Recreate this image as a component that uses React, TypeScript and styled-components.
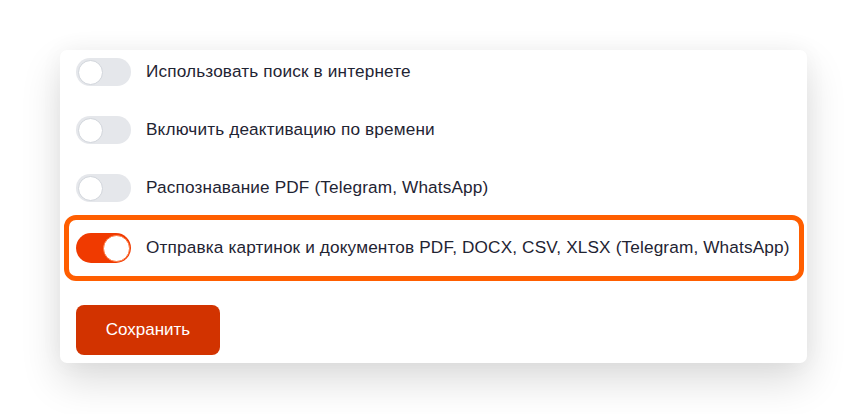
import React, { useState } from "react";
import styled, { createGlobalStyle } from "styled-components";

const GlobalStyle = createGlobalStyle`
  html, body { margin: 0; padding: 0; background: #ffffff; }
  body { font-family: "Liberation Sans", Arial, sans-serif; }
  * { box-sizing: border-box; }
`;

const Page = styled.div`
  width: 867px;
  height: 414px;
  padding: 50px 60px 0 60px;
  background: #ffffff;
  overflow: hidden;
`;

const Card = styled.div`
  width: 747px;
  background: #ffffff;
  border-radius: 7px;
  box-shadow: 0 18px 40px rgba(0, 0, 0, 0.14), 0 0 24px rgba(0, 0, 0, 0.04);
  padding: 8px 16px 8px 16px;
  display: flex;
  flex-direction: column;
`;

const List = styled.div`
  display: flex;
  flex-direction: column;
  gap: 30px;
`;

const Row = styled.label<{ $highlight?: boolean }>`
  display: flex;
  align-items: center;
  gap: 15px;
  cursor: pointer;
  ${(p) =>
    p.$highlight
      ? `
    margin: -17px -13px 0 -12px;
    padding: 13px 7px;
    border: 5px solid #ff5e00;
    border-radius: 12px;
  `
      : ""}
`;

const Track = styled.span<{ $on: boolean }>`
  position: relative;
  flex: 0 0 auto;
  width: 55px;
  height: ${(p) => (p.$on ? 30 : 28)}px;
  border-radius: 15px;
  background: ${(p) => (p.$on ? "#f03a00" : "#e5e7eb")};
`;

const Thumb = styled.span<{ $on: boolean }>`
  position: absolute;
  top: 50%;
  left: ${(p) => (p.$on ? "27px" : "2px")};
  width: ${(p) => (p.$on ? 27 : 25)}px;
  height: ${(p) => (p.$on ? 27 : 25)}px;
  margin-top: ${(p) => (p.$on ? -13.5 : -12.5)}px;
  border-radius: 50%;
  background: #ffffff;
  border: 1px solid ${(p) => (p.$on ? "#ff7a40" : "#d1d5db")};
`;

const Label = styled.span`
  font-size: 17.2px;
  letter-spacing: 0.15px;
  color: #1f2433;
  line-height: 20px;
  margin-top: -2px;
  white-space: nowrap;
`;

const SaveButton = styled.button`
  margin-top: 24px;
  align-self: flex-start;
  width: 144px;
  height: 50px;
  border: none;
  border-radius: 8px;
  background: #d23300;
  color: #ffffff;
  font-family: "Liberation Sans", Arial, sans-serif;
  font-size: 17px;
  cursor: pointer;
`;

const items = [
  { label: "Использовать поиск в интернете", on: false },
  { label: "Включить деактивацию по времени", on: false },
  { label: "Распознавание PDF (Telegram, WhatsApp)", on: false },
  {
    label: "Отправка картинок и документов PDF, DOCX, CSV, XLSX (Telegram, WhatsApp)",
    on: true,
    highlight: true,
  },
];

export default function App() {
  const [state, setState] = useState(items.map((i) => i.on));
  return (
    <>
      <GlobalStyle />
      <Page>
        <Card>
          <List>
            {items.map((it, idx) => (
              <Row
                key={idx}
                $highlight={it.highlight}
                onClick={() =>
                  setState((s) => s.map((v, j) => (j === idx ? !v : v)))
                }
              >
                <Track $on={state[idx]}>
                  <Thumb $on={state[idx]} />
                </Track>
                <Label>{it.label}</Label>
              </Row>
            ))}
          </List>
          <SaveButton>Сохранить</SaveButton>
        </Card>
      </Page>
    </>
  );
}
